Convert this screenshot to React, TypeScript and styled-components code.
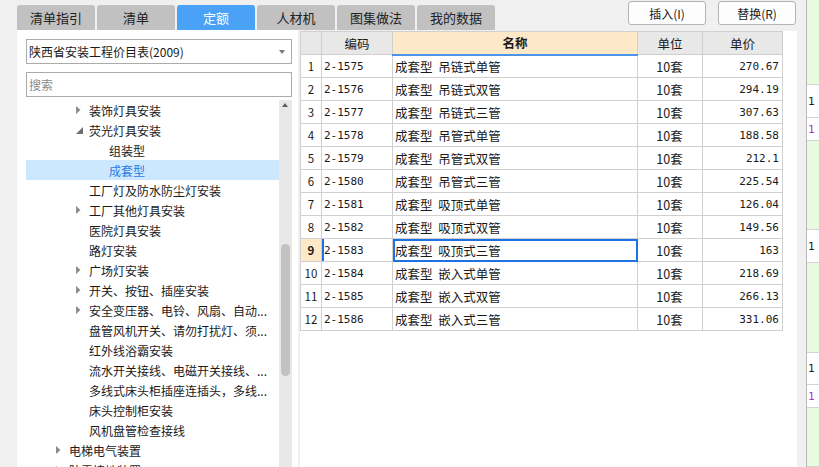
import React from 'react'
import styled, { createGlobalStyle, css } from 'styled-components'
// ______________________________________________________
//
const cjk = `"Microsoft YaHei", "Noto Sans CJK SC", "Noto Sans", sans-serif`
const mono = `"DejaVu Sans Mono", "Noto Sans CJK SC", monospace`
const lineGray = '#d0d0d0'
const focusBlue = '#1f6fe5'
const peach = '#fde8c8'

const GlobalStyle = createGlobalStyle`
  html, body {
    margin: 0;
    padding: 0;
    background: #f0f0f0;
    font-family: ${cjk};
    font-size: 12px;
    color: #1a1a1a;
  }
`
// ______________________________________________________
//
type TreeItem = {
  label: string
  level: number
  arrow?: 'closed' | 'open'
  selected?: boolean
}

const tree: TreeItem[] = [
  { label: '装饰灯具安装', level: 3, arrow: 'closed' },
  { label: '荧光灯具安装', level: 3, arrow: 'open' },
  { label: '组装型', level: 4 },
  { label: '成套型', level: 4, selected: true },
  { label: '工厂灯及防水防尘灯安装', level: 3 },
  { label: '工厂其他灯具安装', level: 3, arrow: 'closed' },
  { label: '医院灯具安装', level: 3 },
  { label: '路灯安装', level: 3 },
  { label: '广场灯安装', level: 3, arrow: 'closed' },
  { label: '开关、按钮、插座安装', level: 3, arrow: 'closed' },
  { label: '安全变压器、电铃、风扇、自动...', level: 3, arrow: 'closed' },
  { label: '盘管风机开关、请勿打扰灯、须...', level: 3 },
  { label: '红外线浴霸安装', level: 3 },
  { label: '流水开关接线、电磁开关接线、...', level: 3 },
  { label: '多线式床头柜插座连插头，多线...', level: 3 },
  { label: '床头控制柜安装', level: 3 },
  { label: '风机盘管检查接线', level: 3 },
  { label: '电梯电气装置', level: 2, arrow: 'closed' },
  { label: '防雷接地装置', level: 2, arrow: 'closed' },
]

const rows = [
  ['2-1575', '成套型 吊链式单管', '270.67'],
  ['2-1576', '成套型 吊链式双管', '294.19'],
  ['2-1577', '成套型 吊链式三管', '307.63'],
  ['2-1578', '成套型 吊管式单管', '188.58'],
  ['2-1579', '成套型 吊管式双管', '212.1'],
  ['2-1580', '成套型 吊管式三管', '225.54'],
  ['2-1581', '成套型 吸顶式单管', '126.04'],
  ['2-1582', '成套型 吸顶式双管', '149.56'],
  ['2-1583', '成套型 吸顶式三管', '163'],
  ['2-1584', '成套型 嵌入式单管', '218.69'],
  ['2-1585', '成套型 嵌入式双管', '266.13'],
  ['2-1586', '成套型 嵌入式三管', '331.06'],
]

const tabs = ['清单指引', '清单', '定额', '人材机', '图集做法', '我的数据']

// side strip: [height, kind, text, purple]
const sideCells: [number, 'green' | 'cell', string?, boolean?][] = [
  [85, 'green'],
  [33, 'cell', '1'],
  [23, 'cell', '1', true],
  [89, 'green'],
  [33, 'cell', '1'],
  [90, 'green'],
  [32, 'cell', '1'],
  [23, 'cell', '1', true],
  [59, 'green'],
]
// ______________________________________________________
//
const Page = styled.div`
  display: flex;
  width: 819px;
  height: 467px;
  overflow: hidden;
`
const Main = styled.div`
  display: flex;
  flex-direction: column;
  width: 806px;
  flex-shrink: 0;
`
const TopBar = styled.div`
  display: flex;
  height: 30px;
  padding-left: 17px;
  padding-right: 10px;
`
const Tabs = styled.div`
  display: flex;
  gap: 2px;
  padding-top: 5px;
`
const Tab = styled.div<{ $active?: boolean }>`
  width: 78px;
  height: 25px;
  display: flex;
  align-items: center;
  justify-content: center;
  border-radius: 3px 3px 0 0;
  font-size: 13px;
  background: ${p => (p.$active ? '#4aa2f6' : '#c1c1c1')};
  color: ${p => (p.$active ? '#ffffff' : '#222222')};
`
const Actions = styled.div`
  display: flex;
  gap: 12px;
  margin-left: auto;
  padding-top: 1px;
  align-items: flex-start;
`
const Button = styled.button`
  width: 78px;
  height: 24px;
  box-sizing: border-box;
  border: 1px solid #b4b4b4;
  border-radius: 3px;
  background: #fdfdfd;
  font-family: ${cjk};
  font-size: 12px;
  color: #1a1a1a;
  padding: 0;
`
const Body = styled.div`
  display: flex;
  flex: 1;
  min-height: 0;
  padding-left: 17px;
`
// ______________________________________________________
//
const LeftPanel = styled.div`
  width: 281px;
  flex-shrink: 0;
  background: #ffffff;
  box-sizing: border-box;
  padding: 9px 6px 0 9px;
  display: flex;
  flex-direction: column;
  gap: 8px;
  overflow: hidden;
`
const Field = styled.div<{ $placeholder?: boolean }>`
  height: 25px;
  box-sizing: border-box;
  border: 1px solid #ababab;
  display: flex;
  align-items: center;
  padding-left: 2px;
  font-size: 12px;
  position: relative;
  color: ${p => (p.$placeholder ? '#8a8a8a' : '#1a1a1a')};
`
const Caret = styled.span`
  position: absolute;
  right: 6px;
  top: 10px;
  width: 0;
  height: 0;
  border-left: 3px solid transparent;
  border-right: 3px solid transparent;
  border-top: 4px solid #7a7a7a;
`
const TreeArea = styled.div`
  display: flex;
  flex: 1;
  margin-top: -5px;
  min-height: 0;
`
const TreeList = styled.div`
  flex: 1;
  overflow: hidden;
`
const TreeRow = styled.div<{ $level: number; $selected?: boolean }>`
  height: 20px;
  display: flex;
  align-items: center;
  padding-left: ${p => (p.$level - 1) * 20 + 9}px;
  white-space: nowrap;
  font-size: 12px;
  ${p =>
    p.$selected &&
    css`
      background: #cce8ff;
      color: #2a7ae2;
    `}
`
const Arrow = styled.span`
  width: 14px;
  height: 20px;
  flex-shrink: 0;
  display: flex;
  align-items: center;
  justify-content: flex-start;
  padding-left: 1px;
  box-sizing: border-box;
`
const ScrollBar = styled.div`
  width: 13px;
  flex-shrink: 0;
  background: #e8e8e8;
  position: relative;
`
const ScrollUp = styled.span`
  position: absolute;
  top: 3px;
  left: 3px;
  width: 0;
  height: 0;
  border-left: 3.5px solid transparent;
  border-right: 3.5px solid transparent;
  border-bottom: 4px solid #606060;
`
const ScrollThumb = styled.span`
  position: absolute;
  top: 144px;
  left: 2px;
  width: 9px;
  height: 132px;
  border-radius: 5px;
  background: #c2c2c2;
`
// ______________________________________________________
//
const Gap = styled.div`
  width: 2px;
  flex-shrink: 0;
`
const TablePane = styled.div`
  width: 497px;
  flex-shrink: 0;
  margin-top: 1px;
  background: #ffffff;
`
const Grid = styled.table`
  border-collapse: collapse;
  table-layout: fixed;
  width: 482px;
  font-size: 12px;
`
const Head = styled.th<{ $active?: boolean }>`
  height: 23px;
  padding: 0;
  box-sizing: border-box;
  border: 1px solid ${lineGray};
  background: ${p => (p.$active ? peach : '#e8e8e8')};
  font-weight: ${p => (p.$active ? 700 : 400)};
  font-size: 12.5px;
  ${p =>
    p.$active &&
    css`
      border-bottom: 2px solid #4a94e8;
    `}
`
const Cell = styled.td<{
  $align?: 'left' | 'center' | 'right'
  $mono?: boolean
  $focus?: boolean
  $mark?: boolean
  $num?: boolean
}>`
  height: 23px;
  box-sizing: border-box;
  padding: 0 3px 0 2px;
  border: 1px solid ${lineGray};
  text-align: ${p => p.$align ?? 'left'};
  white-space: nowrap;
  overflow: hidden;
  word-spacing: 3px;
  font-family: ${p => (p.$mono ? mono : cjk)};
  font-size: ${p => (p.$mono ? '11px' : '12.5px')};
  ${p =>
    p.$num &&
    css`
      padding: 0;
      font-family: ${cjk};
      font-size: 11.5px;
    `}
  ${p =>
    p.$mark &&
    css`
      background: ${peach};
      font-weight: 700;
    `}
  ${p =>
    p.$focus &&
    css`
      outline: 2px solid ${focusBlue};
      outline-offset: -2px;
    `}
`
const CodeCell = styled(Cell)<{ $current?: boolean }>`
  ${p =>
    p.$current &&
    css`
      box-shadow: inset 2px 0 0 ${focusBlue};
    `}
`
// ______________________________________________________
//
const Divider = styled.div`
  width: 10px;
  flex-shrink: 0;
`
const Side = styled.div`
  flex: 1;
  display: flex;
  flex-direction: column;
  border-left: 1px solid #b9b9b9;
  background: #ffffff;
  overflow: hidden;
`
const SideBlock = styled.div<{ $green?: boolean; $purple?: boolean }>`
  flex-shrink: 0;
  box-sizing: border-box;
  border-bottom: 1px solid #d4d4d4;
  background: ${p => (p.$green ? '#e8fbde' : '#ffffff')};
  color: ${p => (p.$purple ? '#b030c8' : '#1a1a1a')};
  font-family: ${mono};
  font-size: 11px;
  display: flex;
  align-items: center;
  padding-left: 1px;
`
// ______________________________________________________
//
const TreeArrow: React.FC<{ kind?: 'closed' | 'open' }> = ({ kind }) => (
  <Arrow>
    {kind === 'closed' && (
      <svg width="5" height="8" viewBox="0 0 5 8">
        <path d="M0 0 L4.5 4 L0 8 Z" fill="#8c8c8c" />
      </svg>
    )}
    {kind === 'open' && (
      <svg width="7" height="7" viewBox="0 0 7 7">
        <path d="M7 0 L7 7 L0 7 Z" fill="#6e6e6e" />
      </svg>
    )}
  </Arrow>
)

const App: React.FC = () => (
  <Page>
    <GlobalStyle />
    <Main>
      <TopBar>
        <Tabs>
          {tabs.map(t => (
            <Tab key={t} $active={t === '定额'}>
              {t}
            </Tab>
          ))}
        </Tabs>
        <Actions>
          <Button>插入(I)</Button>
          <Button>替换(R)</Button>
        </Actions>
      </TopBar>
      <Body>
        <LeftPanel>
          <Field>
            陕西省安装工程价目表(2009)
            <Caret />
          </Field>
          <Field $placeholder>搜索</Field>
          <TreeArea>
            <TreeList>
              {tree.map(item => (
                <TreeRow
                  key={item.label}
                  $level={item.level}
                  $selected={item.selected}
                >
                  <TreeArrow kind={item.arrow} />
                  {item.label}
                </TreeRow>
              ))}
            </TreeList>
            <ScrollBar>
              <ScrollUp />
              <ScrollThumb />
            </ScrollBar>
          </TreeArea>
        </LeftPanel>
        <Gap />
        <TablePane>
          <Grid>
            <colgroup>
              <col style={{ width: 21 }} />
              <col style={{ width: 71 }} />
              <col style={{ width: 245 }} />
              <col style={{ width: 65 }} />
              <col style={{ width: 80 }} />
            </colgroup>
            <thead>
              <tr>
                <Head />
                <Head>编码</Head>
                <Head $active>名称</Head>
                <Head>单位</Head>
                <Head>单价</Head>
              </tr>
            </thead>
            <tbody>
              {rows.map(([code, name, price], i) => {
                const current = i === 8
                return (
                  <tr key={code}>
                    <Cell $num $align="center" $mark={current}>
                      {i + 1}
                    </Cell>
                    <CodeCell $mono $current={current}>
                      {code}
                    </CodeCell>
                    <Cell $focus={current}>{name}</Cell>
                    <Cell $align="center">10套</Cell>
                    <Cell $mono $align="right">
                      {price}
                    </Cell>
                  </tr>
                )
              })}
            </tbody>
          </Grid>
        </TablePane>
        <Divider />
      </Body>
    </Main>
    <Side>
      {sideCells.map(([h, kind, text, purple], i) => (
        <SideBlock
          key={i}
          style={{ height: h }}
          $green={kind === 'green'}
          $purple={purple}
        >
          {text}
        </SideBlock>
      ))}
    </Side>
  </Page>
)
// ______________________________________________________
//
export default App
